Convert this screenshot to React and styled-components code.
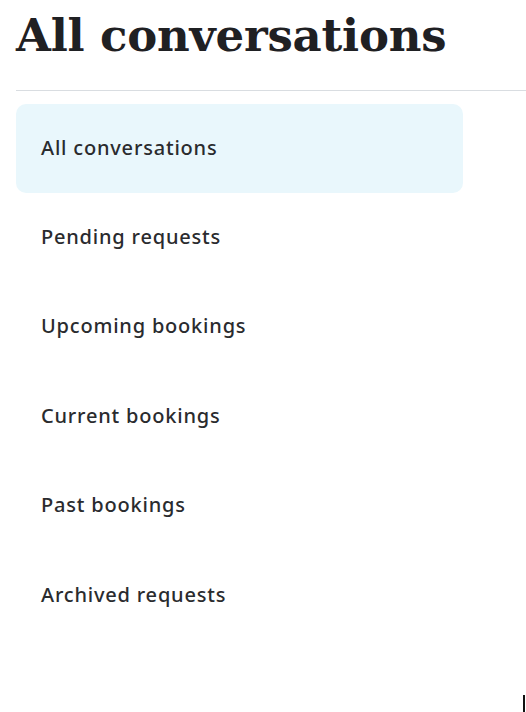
import React from "react";
import styled, { createGlobalStyle } from "styled-components";

const Global = createGlobalStyle`
  html, body { margin: 0; padding: 0; background: #fff; }
  body { font-family: "Noto Sans", sans-serif; color: #222; }
`;

const Page = styled.div`
  position: relative;
  width: 526px;
  height: 712px;
  overflow: hidden;
  padding-left: 16px;
  box-sizing: border-box;
`;

const Title = styled.h1`
  margin: 0;
  padding-top: 8px;
  height: 90px;
  box-sizing: border-box;
  font-family: "DejaVu Serif", serif;
  font-weight: 700;
  font-size: 45px;
  line-height: 56px;
  letter-spacing: -0.2px;
  color: #1f2023;
  white-space: nowrap;
`;

const Divider = styled.hr`
  margin: 0;
  border: 0;
  border-top: 1px solid #d9dde1;
  height: 0;
`;

const Menu = styled.nav`
  display: flex;
  flex-direction: column;
  width: 447px;
  margin-top: 13px;
`;

const Item = styled.a`
  display: flex;
  align-items: center;
  height: 89.4px;
  box-sizing: border-box;
  padding: 0 0 3px 25px;
  border-radius: 10px;
  background: ${(p) => (p.$active ? "#e9f7fc" : "transparent")};
  font-family: "Noto Sans", sans-serif;
  font-weight: 500;
  font-size: 20px;
  letter-spacing: 0.8px;
  color: #2a2b2e;
  text-decoration: none;
`;

const Caret = styled.div`
  position: absolute;
  right: 1px;
  bottom: 0;
  width: 2px;
  height: 17px;
  background: #111;
`;

const items = [
  "All conversations",
  "Pending requests",
  "Upcoming bookings",
  "Current bookings",
  "Past bookings",
  "Archived requests",
];

export default function App() {
  return (
    <>
      <Global />
      <Page>
        <Title>All conversations</Title>
        <Divider />
        <Menu>
          {items.map((t, i) => (
            <Item key={t} $active={i === 0}>
              {t}
            </Item>
          ))}
        </Menu>
        <Caret />
      </Page>
    </>
  );
}
